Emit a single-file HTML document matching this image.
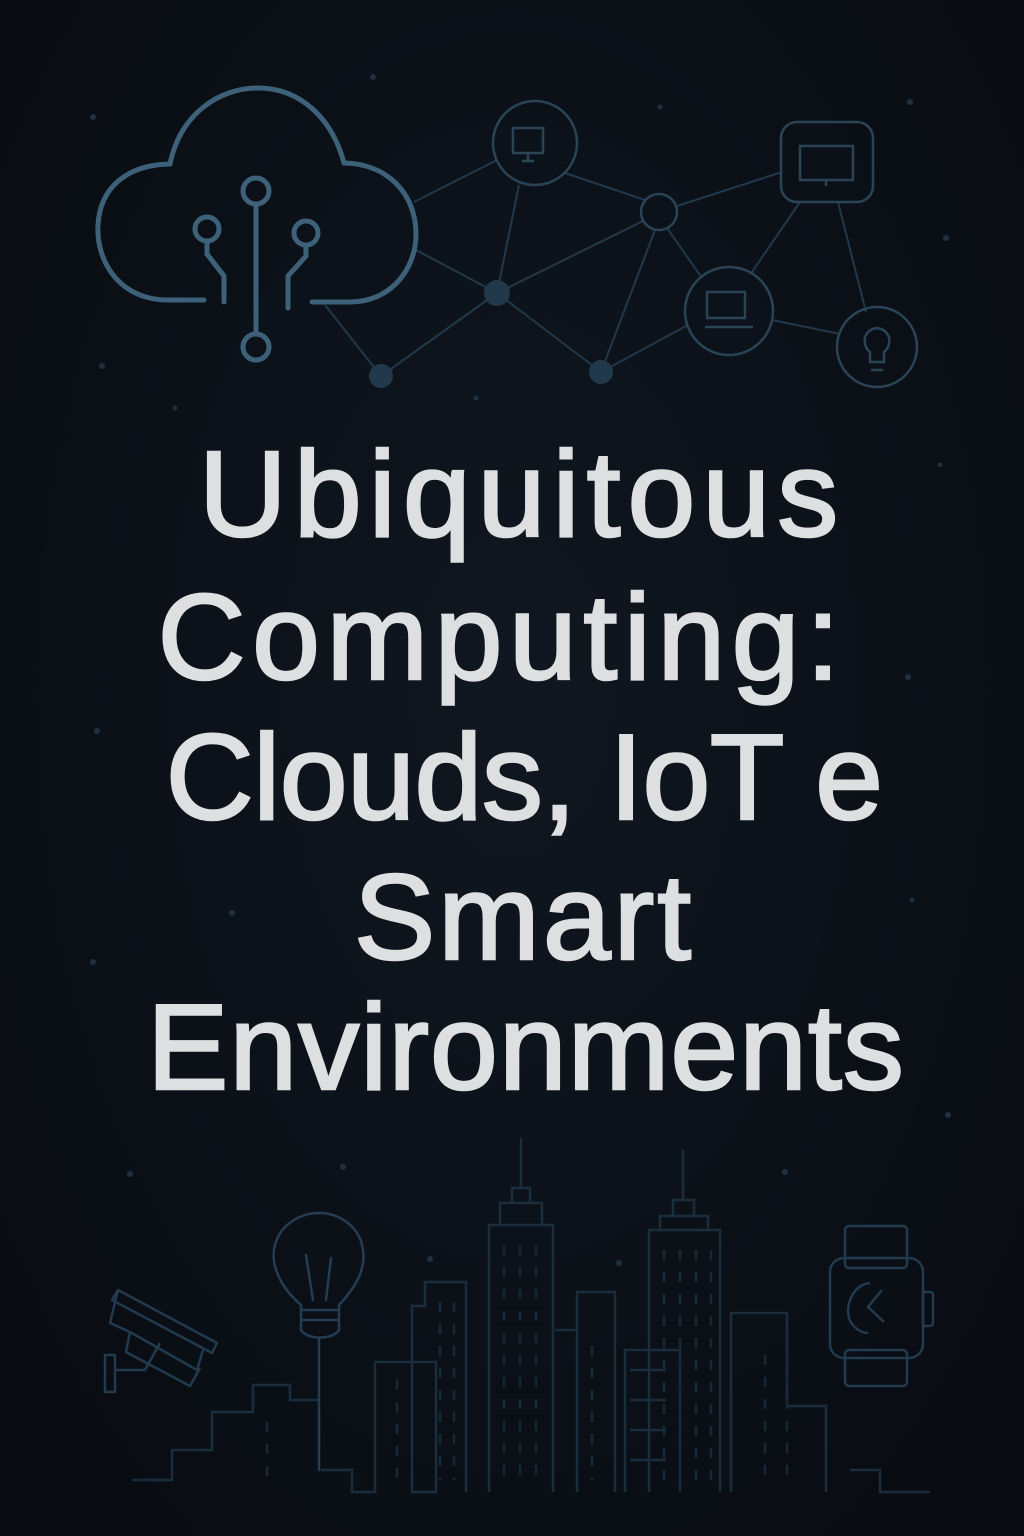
<!DOCTYPE html>
<html><head><meta charset="utf-8"><style>
html,body{margin:0;padding:0}
body{width:1024px;height:1536px;background:radial-gradient(ellipse at 50% 45%,#101720 0%,#0b1017 60%,#080b10 100%);position:relative;overflow:hidden;font-family:"Liberation Sans",sans-serif}
svg{position:absolute;left:0;top:0}
.t{position:absolute;left:0;width:1040px;text-align:center;color:#dedfe0;font-size:122px;line-height:1;white-space:nowrap;letter-spacing:3px;-webkit-text-stroke:2.5px #dedfe0}
</style></head><body>
<svg width="1024" height="1536" viewBox="0 0 1024 1536" fill="none">
<g fill="#1f3140">
<circle cx="373" cy="77" r="3"/><circle cx="910" cy="102" r="3"/><circle cx="93" cy="117" r="3"/><circle cx="660" cy="107" r="2.5"/><circle cx="946" cy="238" r="3"/><circle cx="102" cy="366" r="3"/><circle cx="175" cy="408" r="2.5"/><circle cx="476" cy="398" r="2.5"/><circle cx="940" cy="465" r="2.5"/><circle cx="97" cy="731" r="3"/><circle cx="908" cy="677" r="3"/><circle cx="232" cy="913" r="3"/><circle cx="93" cy="962" r="3"/><circle cx="912" cy="900" r="2.5"/><circle cx="948" cy="1115" r="3"/><circle cx="130" cy="1174" r="3"/><circle cx="343" cy="1167" r="3"/><circle cx="430" cy="1259" r="3"/><circle cx="619" cy="1263" r="3"/><circle cx="785" cy="1172" r="3"/>
</g>
<g stroke="#22384a" stroke-width="2">
<line x1="414" y1="202" x2="497" y2="160"/><line x1="416" y1="250" x2="497" y2="293"/>
<line x1="325" y1="305" x2="381" y2="376"/><line x1="497" y1="293" x2="381" y2="376"/>
<line x1="497" y1="293" x2="601" y2="372"/><line x1="497" y1="293" x2="519" y2="185"/>
<line x1="497" y1="293" x2="643" y2="221"/><line x1="565" y1="173" x2="645" y2="200"/>
<line x1="677" y1="206" x2="782" y2="172"/><line x1="655" y1="230" x2="601" y2="372"/>
<line x1="667" y1="228" x2="702" y2="278"/><line x1="601" y1="372" x2="688" y2="325"/>
<line x1="800" y1="202" x2="752" y2="272"/><line x1="838" y1="202" x2="866" y2="312"/>
<line x1="772" y1="320" x2="840" y2="334"/>
</g>
<g fill="#22394b"><circle cx="497" cy="293" r="13"/><circle cx="381" cy="376" r="12"/><circle cx="601" cy="372" r="12"/></g>
<g stroke="#2a4456" stroke-width="2.5">
<circle cx="535" cy="143" r="42"/>
<rect x="513" y="128" width="30" height="25"/><line x1="528" y1="153" x2="528" y2="160"/><line x1="522" y1="161" x2="534" y2="161"/>
<circle cx="659" cy="212" r="18"/>
<rect x="781" y="122" width="92" height="80" rx="16"/>
<rect x="800" y="146" width="53" height="34"/><line x1="826" y1="180" x2="826" y2="186"/>
<circle cx="729" cy="311" r="44"/>
<rect x="707" y="292" width="38" height="26"/><line x1="705" y1="327" x2="753" y2="327"/>
<circle cx="877" cy="347" r="40"/>
<path d="M870 362 L870 352 C862 346 862 330 877 328 C892 330 892 346 884 352 L884 362 Z M871 370 L883 370"/>
</g>
<g stroke="#3d6178" stroke-width="5" stroke-linecap="round">
<path d="M204 300 L168 300 C120 300 96 262 98 225 C100 188 126 165 170 164 C180 115 218 88 258 88 C300 88 332 118 344 163 C390 164 416 196 416 234 C416 270 390 302 350 302 L312 302"/>
<circle cx="256" cy="191" r="13"/><circle cx="256" cy="347" r="13"/>
<line x1="256" y1="204" x2="256" y2="334"/>
<circle cx="207" cy="229" r="12"/><path d="M207 241 L207 254 L224 276 L224 302"/>
<circle cx="306" cy="233" r="12"/><path d="M306 245 L306 256 L288 276 L288 308"/>
</g>
<g stroke="#1a2d3c" stroke-width="2.5">
<path d="M132 1480 L172 1480 L172 1450 L212 1450 L212 1412 L253 1412 L253 1385 L290 1385 L290 1400 L318 1400"/>
<path d="M321 1470 L352 1470 L352 1492 L375 1492 L375 1362 L436 1362 L436 1492 L412 1492 L412 1306 L425 1306 L425 1282 L466 1282 L466 1492"/>
<path d="M489 1492 L489 1225 L553 1225 L553 1492 M500 1225 L500 1203 L542 1203 L542 1225 M512 1203 L512 1188 L530 1188 L530 1203 M521 1188 L521 1138"/>
<path d="M555 1330 L577 1330 L577 1292 L615 1292 L615 1492 M577 1330 L577 1492"/>
<path d="M649 1492 L649 1230 L720 1230 L720 1492 M660 1230 L660 1216 L708 1216 L708 1230 M673 1216 L673 1200 L694 1200 L694 1216 M683 1200 L683 1150"/>
<path d="M625 1492 L625 1350 L680 1350 L680 1492"/>
<path d="M731 1492 L731 1313 L787 1313 L787 1406 L826 1406 L826 1492"/>
<path d="M850 1470 L880 1470 L880 1492 L930 1492"/>
</g>
<g stroke="#172836" stroke-width="2.5" stroke-dasharray="10 12">
<path d="M504 1245 V1480 M520 1245 V1480 M536 1245 V1480 M664 1250 V1480 M680 1250 V1480 M696 1250 V1480 M711 1250 V1480 M440 1302 V1480 M454 1302 V1480 M592 1346 V1480 M397 1380 V1480 M267 1422 V1480 M787 1355 V1480 M765 1355 V1480"/>
</g>
<g stroke="#1a2d3c" stroke-width="2.5"><path d="M630 1370 H666 M630 1400 H666 M630 1430 H666 M630 1460 H666"/></g>
<g stroke="#243d52" stroke-width="2.5" stroke-linecap="round">
<path d="M301 1330 L301 1305 C278 1285 270 1262 275 1245 C280 1225 300 1213 319 1213 C340 1213 360 1227 363 1250 C366 1270 355 1288 339 1305 L339 1330 C333 1340 307 1340 301 1330 Z"/>
<path d="M301 1310 H339 M301 1320 H339 M313 1300 L306 1255 M326 1300 L331 1258"/>
<line x1="319" y1="1338" x2="319" y2="1470"/>
</g>
<g stroke="#223a4e" stroke-width="2.5" stroke-linejoin="round">
<path d="M118 1290 L217 1343 L212 1353 L112 1300 Z"/>
<path d="M118 1290 L110 1323 L130 1332 L197 1370 L203 1350"/>
<path d="M130 1332 L126 1352 L190 1386 L200 1368"/>
<path d="M105 1355 L115 1355 L115 1392 L105 1392 Z M115 1370 L145 1370 L160 1343"/>
</g>
<g stroke="#223a4e" stroke-width="2.5">
<rect x="845" y="1226" width="62" height="42" rx="4"/>
<rect x="830" y="1258" width="93" height="100" rx="14"/>
<rect x="845" y="1350" width="62" height="36" rx="4"/>
<rect x="923" y="1292" width="10" height="34" rx="3"/>
<path d="M870 1283 C850 1285 843 1312 852 1324 C857 1330 862 1333 868 1333 M882 1290 L868 1307 L884 1322"/>
</g>
</svg>
<div class="t" style="top:433px;letter-spacing:7px;left:2px">Ubiquitous</div>
<div class="t" style="top:576px;left:-18px;letter-spacing:6.5px">Computing:</div>
<div class="t" style="top:716px;letter-spacing:-0.5px;left:4px">Clouds, IoT e</div>
<div class="t" style="top:856px;left:4px">Smart</div>
<div class="t" style="top:986px;letter-spacing:1px;left:6px">Environments</div>
</body></html>
